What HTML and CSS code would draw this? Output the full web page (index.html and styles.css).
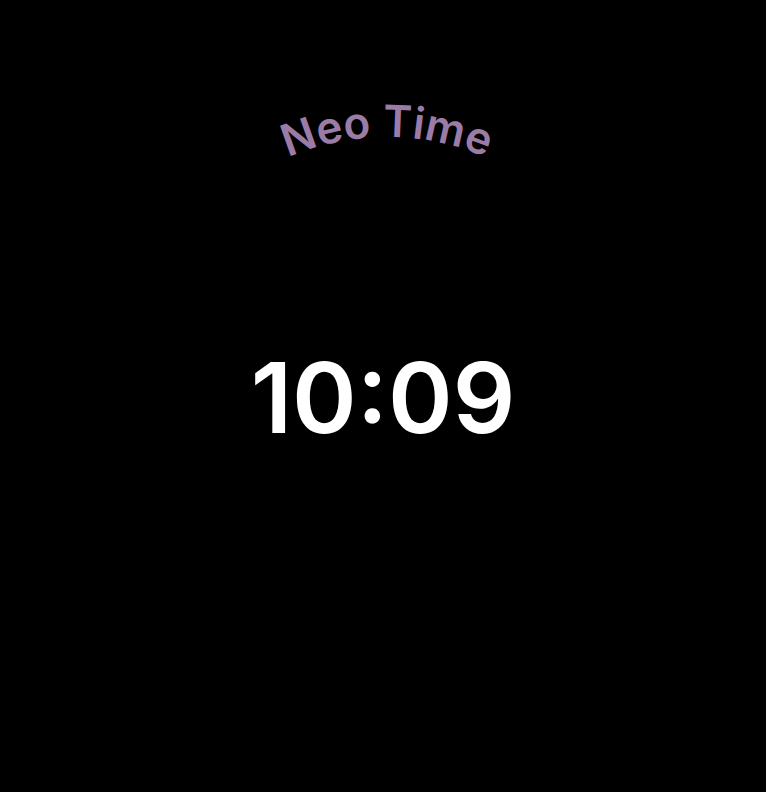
FILE: index.html
```html
<!DOCTYPE html>
<html>
<head>
<meta charset="utf-8">
<link rel="stylesheet" href="styles.css">
</head>
<body>
<main class="face">
  <svg class="title" width="766" height="200" viewBox="0 0 766 200">
    <defs>
      <path id="arc" d="M 137 387 A 250 250 0 0 1 637 387"/>
    </defs>
    <text class="title-text"><textPath href="#arc" startOffset="50%" text-anchor="middle">Neo Time</textPath></text>
  </svg>
  <div class="time">10:09</div>
</main>
</body>
</html>
```
FILE: styles.css
```css
html, body {
  margin: 0;
  padding: 0;
  background: #000;
}
.face {
  width: 766px;
  height: 792px;
  display: flex;
  flex-direction: column;
  align-items: center;
  background: #000;
}
.title {
  display: block;
}
.title-text {
  font-family: Inter, "Liberation Sans", sans-serif;
  font-weight: 600;
  font-size: 44px;
  fill: #9a7ca6;
}
.time {
  margin-top: 148px;
  font-family: Inter, "Liberation Sans", sans-serif;
  font-weight: 600;
  font-size: 98px;
  line-height: 100px;
  color: #fff;
}
```
